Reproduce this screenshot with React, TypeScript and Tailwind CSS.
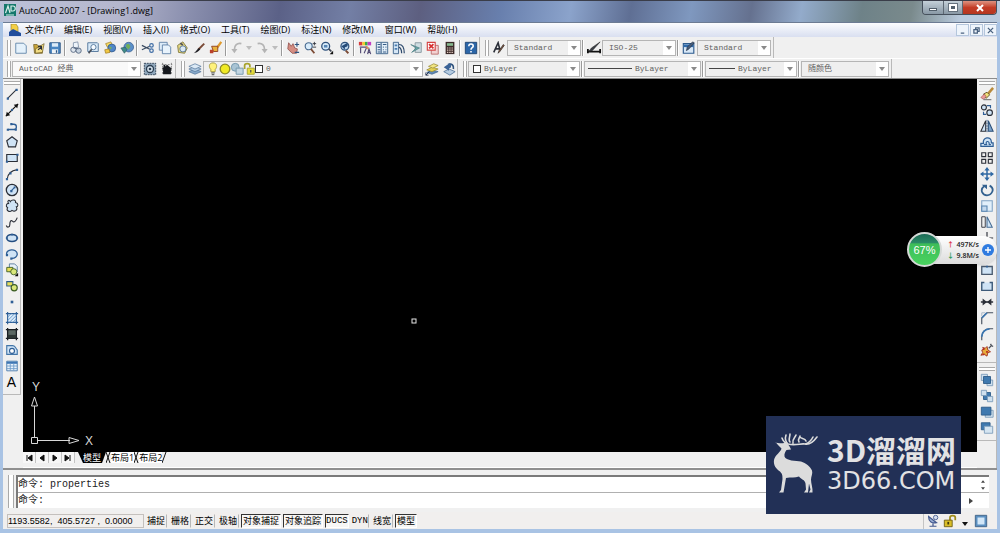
import type { ReactNode } from "react";

const MONO = "font-['Liberation_Mono','Noto_Sans_CJK_SC',monospace]";
const SANS = "font-['Open_Sans','Noto_Sans_CJK_SC',sans-serif]";

const B = "#2f5f96";
const L = "#cfe3f5";
const K = "#2b2f38";

// Desenhos dos botões, todos em uma grade de 16x16.
const ICONS: Record<string, ReactNode> = {
  new: <path d="M2 2.5h9l3 3v8.500H2z" fill="#e4f1fb" stroke="#5d83a8" />,
  open: (
    <>
      <path d="M3 4h4l1 1.500h5V14H4z" fill="#c9a43a" stroke="#6a5a22" strokeWidth=".8" />
      <path d="M5 9l10-6-2 10-8 1z" fill="#f3dc83" stroke="#6a5a22" strokeWidth=".8" />
      <path d="M8 10l4-3M12 10V6.500H8" stroke={K} strokeWidth="1.300" />
    </>
  ),
  save: (
    <>
      <path d="M2 2h12v12H2z" fill="#4a86c2" stroke="#2b5584" />
      <path d="M4.500 2.500h7v4h-7z" fill="#dcebf8" />
      <path d="M4.500 9.500h7V14h-7z" fill="#eef3f7" />
      <path d="M9 10.500h1.500v3H9z" fill="#2b5584" />
    </>
  ),
  plot: (
    <>
      <path d="M5 2l5-1 1 6-6 1z" fill="#eef4fa" stroke="#6c7f99" strokeWidth=".8" />
      <circle cx="5" cy="10" r="3" fill="#dfe6ee" stroke="#55667f" />
      <circle cx="11" cy="11" r="3" fill="#c7d3e0" stroke="#55667f" />
      <path d="M5 8l6 1" stroke="#55667f" />
    </>
  ),
  preview: (
    <>
      <path d="M2 2h11l1 1v9H2z" fill="#d9eaf8" stroke="#4c7096" />
      <circle cx="8.500" cy="7" r="3" fill="#f7fbff" stroke="#4c7096" />
      <path d="M6.500 9.500L3 14" stroke="#4a4f58" strokeWidth="2" />
    </>
  ),
  publish: (
    <>
      <path d="M3 3l6-2 2 4-6 2z" fill="#f6dc64" stroke="#a07b1d" strokeWidth=".8" />
      <circle cx="10" cy="8" r="4.500" fill="#4f86c8" stroke="#2c5283" strokeWidth=".8" />
      <path d="M7 6l3 1-1 3z" fill="#79b354" />
      <path d="M2 10l5-1 1 4-5 1z" fill="#f0c743" stroke="#a07b1d" strokeWidth=".8" />
    </>
  ),
  web: (
    <>
      <circle cx="10" cy="7" r="5.500" fill="#5b8fc9" stroke="#315a8b" strokeWidth=".8" />
      <path d="M7 4l3-1 2 3-2 4-3-3z" fill="#6fae5a" />
      <path d="M1 8l5-1 2 3-3 4z" fill="#3d8a86" stroke="#2b5560" strokeWidth=".7" />
    </>
  ),
  cut: (
    <>
      <path d="M1 5l9 4.500M1 10l9-4" stroke="#3c4d63" strokeWidth="1.400" />
      <circle cx="12" cy="5" r="2" stroke="#3f6da5" strokeWidth="1.400" />
      <circle cx="12" cy="11" r="2" stroke="#3f6da5" strokeWidth="1.400" />
    </>
  ),
  copy: (
    <>
      <path d="M1.500 1.500h9v9h-9z" fill="#dcebf8" stroke="#5b7fa6" />
      <path d="M5 4.500h7l2.500 2.500v7.500H5z" fill="#e8f3fc" stroke="#5b7fa6" />
    </>
  ),
  paste: (
    <>
      <path d="M3 5l6-4 5 7-3 6-7-1z" fill="#e9da83" stroke="#7f7637" />
      <circle cx="9" cy="9" r="3.500" fill="#dbe9f5" stroke="#4f7295" />
      <path d="M6 2.500l3 2" stroke="#555" strokeWidth="2" />
    </>
  ),
  match: (
    <>
      <path d="M14 3L7 10" stroke="#7a4a36" strokeWidth="2.200" />
      <path d="M8 8l1.500 1.500C7 13 4 13.500 2 14c2-1 3-4 6-6z" fill="#1f1f24" />
    </>
  ),
  block: (
    <>
      <path d="M14 1L9 8" stroke="#e09a2c" strokeWidth="2.600" />
      <path d="M3 6h7v6H5z" fill="#e9b23c" stroke="#8c3a1f" />
      <path d="M1 10h4v4H1z" fill="#b9402a" />
    </>
  ),
  undo: (
    <>
      <path d="M13 3C8 2 5 5 5 10" stroke="#b4b4b4" strokeWidth="2" />
      <path d="M1.500 9h7L5 14z" fill="#b4b4b4" />
    </>
  ),
  redo: (
    <>
      <path d="M3 3c5-1 8 2 8 7" stroke="#b4b4b4" strokeWidth="2" />
      <path d="M7.500 9h7L11 14z" fill="#b4b4b4" />
    </>
  ),
  pan: (
    <>
      <path d="M3 2l3 4 2-3 2 5 3 1-1 5H7L2 9z" fill="#d58d82" stroke="#8d4c49" strokeWidth=".9" />
      <path d="M10 4h5M12.500 1.500v5M10 13h5" stroke="#2f5480" strokeWidth="1.300" />
    </>
  ),
  zoom: (
    <>
      <circle cx="6.500" cy="6" r="4" fill="#d9ecfa" stroke="#47698f" strokeWidth="1.300" />
      <path d="M9 9l4 5" stroke="#7c4b35" strokeWidth="2" />
      <path d="M11 3h4M13 1v4M11 7h4" stroke={K} />
    </>
  ),
  zoomwin: (
    <>
      <circle cx="6.500" cy="6" r="4.500" fill="#d9ecfa" stroke="#2f527c" strokeWidth="1.500" />
      <path d="M4.500 4.500h4v3h-4z" fill="#5686b6" />
      <path d="M10 9l3 3" stroke="#3e4552" strokeWidth="2" />
      <path d="M15 11v4h-4z" fill="#111" />
    </>
  ),
  zoomprev: (
    <>
      <circle cx="9" cy="6" r="4.500" fill="#b8d3ec" stroke="#2f527c" strokeWidth="1.400" />
      <path d="M12 2L5 6l4 4V7c3 0 4-2 3-5z" fill="#244a78" />
      <path d="M10 11l3 3" stroke="#7c4b35" strokeWidth="2.200" />
    </>
  ),
  props: (
    <>
      <path d="M1 1h4v4H1z" fill="#d83a3a" />
      <path d="M5 1h3v4H5z" fill="#efce2f" />
      <path d="M8 1h3v4H8z" fill="#3aa64b" />
      <path d="M11 1h4v4h-4z" fill="#c23ec4" />
      <path d="M2 7h8l-3 7M3 14V8M11 15l1.500-6 2 6M11 13h3" stroke="#524a74" strokeWidth="1.300" />
      <path d="M9 6l3 3" stroke="#d98a5b" strokeWidth="2" />
    </>
  ),
  center: (
    <>
      <path d="M1.500 1.500h13v13h-13z" fill="#e3eff9" stroke="#365b85" />
      <path d="M7 2v12M3 4h3M3 7h3M3 10h3M9 4h4M9 7h1M12 7h1M9 10h1M12 10h1M9 12.500h4M3 12.500h3" stroke="#365b85" strokeWidth="1.200" />
    </>
  ),
  palettes: (
    <>
      <path d="M1.500 1.500h6v13h-6z" fill="#d5e6f5" stroke="#365b85" />
      <path d="M3 4h3v2H3zM3 8h3v2H3z" fill="#4e7fb1" />
      <path d="M8 4c4 0 6 4 6 10M8 7c2 1 3 4 3 7" stroke="#2e4a6d" strokeWidth="1.400" />
    </>
  ),
  sheet: (
    <>
      <path d="M7 2h7v11H7z" fill="#cfdde2" stroke="#84959c" />
      <path d="M2 4l10 4-9 5 5-5z" fill="#69a5a5" stroke="#44777d" strokeWidth=".7" />
    </>
  ),
  markup: (
    <>
      <path d="M6 5h8v10H6z" fill="#f2d2d2" stroke="#b86a6a" />
      <path d="M1.500 1.500h9v9h-9z" fill="#fff" stroke="#d34444" strokeWidth="1.300" />
      <path d="M3.500 3.500l5 5M8.500 3.500l-5 5" stroke="#d62f2f" strokeWidth="2" />
    </>
  ),
  calc: (
    <>
      <path d="M3 1h10v14H3z" fill="#3b2a29" />
      <path d="M4.500 2.500h7v3h-7z" fill="#86b98f" />
      <path d="M4.500 8h7M4.500 10.500h7M4.500 13h7" stroke="#e1c9c0" strokeWidth="1.300" strokeDasharray="1.600 1" />
    </>
  ),
  help: (
    <>
      <path d="M1.500 1.500h13v13h-13z" fill="#2c66a8" stroke="#1b416f" />
      <path d="M5.500 6c0-4 5.500-3 5 0-.3 1.800-2.500 1.500-2.500 4M8 11.300v1.700" stroke="#fff" strokeWidth="1.800" />
    </>
  ),
  textstyle: (
    <>
      <path d="M2 13L7 2l2 8M4 9h5" stroke={K} strokeWidth="1.800" />
      <path d="M14 5L9 12l-2 2 1-3 5-7z" fill="#8f5a3f" stroke="#222" strokeWidth=".8" />
    </>
  ),
  dimstyle: (
    <>
      <path d="M1 9v5M15 9v5M2 12h12" stroke="#111" strokeWidth="2" />
      <path d="M15 1L6 11l-4 1 3-4z" fill="#3c4048" stroke="#222" strokeWidth=".6" />
    </>
  ),
  tablestyle: (
    <>
      <path d="M1.500 3h12v11h-12z" fill="#d8e8f7" stroke="#2d5b8e" strokeWidth="1.300" />
      <path d="M2 4h11v3H2z" fill="#2f6bac" />
      <path d="M14 2L8 9l-3 2 1-4 6-6z" fill="#4c5f7a" stroke="#1d2c42" strokeWidth=".7" />
    </>
  ),
  gear: (
    <>
      <path d="M1.500 1.500h13v13h-13z" fill="#8ea6bb" stroke="#2b3d50" strokeDasharray="2 1" />
      <circle cx="8" cy="8" r="4" fill="#d7e5f0" stroke="#2b3d50" strokeWidth="1.500" />
      <circle cx="8" cy="8" r="1.500" fill="#2b3d50" />
    </>
  ),
  home: (
    <>
      <path d="M2 3h12M3 1v14M13 1v14" stroke="#777" strokeDasharray="2 1.500" />
      <path d="M4 3h2v2l2-2 6 5h-1.500v6h-9V8H2l2-2z" fill="#15181d" />
    </>
  ),
  layers: (
    <>
      <path d="M1 11l7-3 7 3-7 3z" fill="#87a8c9" stroke="#50749a" strokeWidth=".8" />
      <path d="M1 8l7-3 7 3-7 3z" fill="#b0cae2" stroke="#50749a" strokeWidth=".8" />
      <path d="M1 5l7-3 7 3-7 3z" fill="#dbe9f5" stroke="#50749a" strokeWidth=".8" />
    </>
  ),
  layerset: (
    <>
      <path d="M2 12l6-3 7 2-7 3z" fill="#5f88b4" stroke="#3e638c" strokeWidth=".8" />
      <path d="M2 9l6-3 7 2-7 3z" fill="#e4d152" stroke="#93852a" strokeWidth=".8" />
      <path d="M4 5l6-3 5 2-6 3z" fill="#f1e583" stroke="#93852a" strokeWidth=".8" />
      <path d="M1 15l4-4M1 15v-3M1 15h3" stroke="#1b2b4a" />
    </>
  ),
  layerprev: (
    <>
      <path d="M2 11l6-3 7 3-6 4z" fill="#b5cbe0" stroke="#3e638c" strokeWidth=".8" />
      <path d="M13 8c1-4-2-7-6-5" stroke="#2f527c" strokeWidth="2" />
      <path d="M9 1L2 6l6 4V7c3 0 3-3 1-6z" fill="#3a6296" />
    </>
  ),
  bulb: (
    <>
      <path d="M8 1c5 0 5 5 2.500 7.500V11h-5V8.500C3 6 3 1 8 1z" fill="#fff27a" stroke="#a4973a" />
      <path d="M6 12.500h4M6.500 14.500h3" stroke="#666" strokeWidth="1.300" />
    </>
  ),
  sun: <circle cx="8" cy="8" r="5.500" fill="#f0ea24" stroke="#8d8a2a" strokeWidth="1.500" />,
  freeze: (
    <>
      <circle cx="6" cy="6" r="4.500" fill="#a9c4d4" stroke="#6f94a9" />
      <path d="M7 7h8v7H7z" fill="#c3d6e2" stroke="#6f94a9" />
    </>
  ),
  lock: (
    <>
      <path d="M3 8V4c0-3 6-3 6 0v2" stroke="#a8a32c" strokeWidth="2" />
      <path d="M6 7h8v7H6z" fill="#e6dd3a" stroke="#a8a32c" />
      <path d="M10 9v3" stroke="#555" strokeWidth="1.500" />
    </>
  ),
  line: (
    <>
      <path d="M3 13L13 3" stroke={K} strokeWidth="1.200" />
      <path d="M2 12h2.500v2.500H2zM12 2h2.500v2.500H12z" fill={B} />
    </>
  ),
  xline: (
    <>
      <path d="M1 15L15 1" stroke="#111" strokeWidth="1.500" />
      <path d="M1 15l1-5 4 4zM15 1l-1 5-4-4z" fill="#111" />
      <circle cx="8" cy="8" r="1.300" fill={B} />
    </>
  ),
  pline: (
    <>
      <path d="M3 12h7c4 0 4-6 0-6H8" stroke={B} strokeWidth="1.500" />
      <path d="M2 11h2.500v2.500H2zM11 11h2.500v2.500H11zM6 4.500h2.500V7H6z" fill={B} />
    </>
  ),
  polygon: <path d="M8 2l6 4.500L12 13.500H4L2 6.500z" fill={L} stroke={K} strokeWidth="1.300" />,
  rect: (
    <>
      <path d="M2 4h12v8H2z" fill={L} stroke={K} strokeWidth="1.300" />
      <path d="M1 11h2.500v2.500H1zM13 3h2.500v2.500H13z" fill={B} />
    </>
  ),
  arc: (
    <>
      <path d="M2.500 14C3 8 7 4 14 3" stroke={K} strokeWidth="1.300" />
      <path d="M1 12.500h2.500V15H1zM5 6h2.500v2.500H5zM12.500 2H15v2.500h-2.500z" fill={B} />
    </>
  ),
  circle: (
    <>
      <circle cx="8" cy="8" r="6.500" fill={L} stroke={K} strokeWidth="1.500" />
      <path d="M7 9l4-4" stroke={B} strokeWidth="1.500" />
      <path d="M6 8h2.500v2.500H6zM10 4h2v2h-2z" fill={B} />
    </>
  ),
  cloud: <path d="M6 3c2-3 7-2 6 1 4 1 3 5 1 5 2 4-2 6-5 4-3 3-7 0-5-3-3-2-1-5 1-5-2-3 1-5 2-2z" fill={L} stroke={K} strokeWidth="1.200" />,
  spline: <path d="M1.500 12c1 3 4 2 4-1s1-6 3-4 4 0 5.500-4" stroke={K} strokeWidth="1.300" />,
  ellipse: (
    <>
      <ellipse cx="8" cy="8" rx="6" ry="4" fill={L} stroke="#234d80" strokeWidth="1.800" />
      <path d="M7 3h2v2H7zM1 7h2v2H1zM13 7h2v2h-2z" fill={B} />
    </>
  ),
  earc: (
    <>
      <path d="M2 9C0 2 14 1 14 8c0 3-3 5-6 5" stroke={B} strokeWidth="1.500" fill={L} />
      <path d="M6 12h2.500v2.500H6zM1 8h2.500v2.500H1z" fill={B} />
    </>
  ),
  insert: (
    <>
      <path d="M5 1h6l3 3v6H5z" fill="#e7f0f8" stroke="#54779c" />
      <path d="M2 5h7v5H2z" fill="#e7dd56" stroke="#3b5d22" />
      <circle cx="10" cy="10" r="3.500" fill="#d9e77a" stroke="#3b5d22" />
      <path d="M15 11v4h-4z" fill="#111" />
    </>
  ),
  makeblock: (
    <>
      <path d="M2 3h7v5H2z" fill="#e7dd56" stroke="#2e5b86" strokeWidth="1.200" />
      <circle cx="10.500" cy="10" r="3.500" fill="#dbe77a" stroke="#3b5d22" strokeWidth="1.300" />
    </>
  ),
  point: <path d="M6.500 6.500h3v3h-3z" fill={B} />,
  hatch: (
    <>
      <path d="M3 3h10v10H3z" fill="#dcecfa" stroke={B} strokeWidth="1.300" />
      <path d="M3 7l4-4M3 11l8-8M5 13l8-8M9 13l4-4" stroke="#5f92c6" />
      <path d="M1 3h2V1M15 3h-2V1M1 13h2v2M15 13h-2v2" stroke={B} strokeWidth="1.300" />
    </>
  ),
  gradient: (
    <>
      <path d="M3 3h10v10H3z" fill="#5a6762" stroke="#191d22" strokeWidth="1.500" />
      <path d="M3 9h10v4H3z" fill="#2c3533" />
      <path d="M1 3h2V1M15 3h-2V1M1 13h2v2M15 13h-2v2" stroke="#191d22" strokeWidth="1.500" />
    </>
  ),
  region: (
    <>
      <path d="M2 3h7c3 0 3 3 5 5v5H2z" fill={L} stroke="#4476a8" strokeWidth="1.300" />
      <circle cx="8" cy="9" r="2.800" fill="#fff" stroke={B} strokeWidth="1.300" />
    </>
  ),
  table: (
    <>
      <path d="M2 2.500h12v11H2z" fill="#e9f3fc" stroke="#4476a8" />
      <path d="M2 3h12v2.500H2z" fill="#3f77b4" />
      <path d="M2 8h12M2 11h12M6 5v8M10 5v8" stroke="#6f9cc9" />
    </>
  ),
  erase: (
    <>
      <path d="M15 1L9 8" stroke="#b98a3a" strokeWidth="3" />
      <path d="M4 8l4-2 3 3-4 4z" fill="#f0e27a" stroke="#5c4a2a" />
      <path d="M1 12l4-4 2 3-3 3z" fill="#e99a9a" stroke="#a24c4c" strokeWidth=".7" />
      <path d="M4 14.500h9" stroke="#555" />
    </>
  ),
  copyobj: (
    <>
      <circle cx="4.500" cy="5" r="2.800" fill={L} stroke={K} strokeWidth="1.300" />
      <circle cx="11" cy="11" r="3.200" fill={L} stroke={K} strokeWidth="1.300" />
      <path d="M8 3h4v3M4 10v3h3" stroke={B} strokeWidth="1.300" />
    </>
  ),
  mirror: (
    <>
      <path d="M6.500 2v12H1z" fill={L} stroke={K} strokeWidth="1.200" />
      <path d="M9.500 2v12H15z" fill="#7ba3cb" stroke="#2c5079" strokeWidth="1.200" />
      <path d="M8 1v14" stroke="#2c5079" strokeDasharray="2 1" />
    </>
  ),
  offset: (
    <>
      <path d="M1 13V9.500h3C2 3 13 0 13 8v1h2v4z" fill={L} stroke={B} strokeWidth="1.400" />
      <path d="M4.500 11h3c-2-4 3-5 3-1v1h2" stroke={B} strokeWidth="1.300" />
    </>
  ),
  array: <path d="M2 2h4.500v4.500H2zM9.500 2H14v4.500H9.500zM2 9.500h4.500V14H2zM9.500 9.500H14V14H9.500z" stroke={K} strokeWidth="1.300" />,
  move: (
    <>
      <path d="M8 2v12M2 8h12" stroke="#2f68a3" strokeWidth="1.700" />
      <path d="M8 0l3 4H5zM8 16l3-4H5zM0 8l4-3v6zM16 8l-4-3v6z" fill="#2f68a3" />
    </>
  ),
  rotate: (
    <>
      <path d="M5 3.500C-1 8 3 14 8 14s10-7 3-11" stroke="#33618f" strokeWidth="2" />
      <path d="M2 2h6v5z" fill="#33618f" />
    </>
  ),
  scale: (
    <>
      <path d="M2 2h12v12H2z" fill="#e1effa" stroke="#7fa2c4" strokeWidth="1.200" />
      <path d="M2 8h6v6H2z" fill="#c3d9ee" stroke="#5683ae" strokeWidth="1.200" />
    </>
  ),
  stretch: (
    <>
      <path d="M2 2h4v12H2z" stroke={K} />
      <path d="M8 2l6 12H8z" fill={L} stroke="#466d96" strokeWidth="1.200" />
    </>
  ),
  trim: <path d="M1 8h5M10 8h5M8 1v14" stroke={K} strokeWidth="1.300" />,
  extend: <path d="M1 8h10M13 1v14M8 5l3 3-3 3" stroke={K} strokeWidth="1.300" />,
  breakat: (
    <>
      <path d="M2 4h12v9H2z" fill={L} stroke="#49596d" strokeWidth="1.500" />
      <path d="M7 3h2v2H7z" fill={B} />
    </>
  ),
  breakobj: <path d="M5 4H2v9h12V4h-3" fill={L} stroke="#3d5a79" strokeWidth="1.600" />,
  join: (
    <>
      <path d="M1 8h14" stroke={K} strokeWidth="1.700" />
      <path d="M3 4l5 4-5 4zM13 4L8 8l5 4z" fill={K} />
    </>
  ),
  chamfer: (
    <>
      <path d="M2 15V8l6-6h7" stroke="#444f5e" strokeWidth="1.300" />
      <path d="M2 8l6-6" stroke="#3a75b0" strokeWidth="1.800" />
      <path d="M2 6V2h4" stroke="#a6b4c3" />
    </>
  ),
  fillet: (
    <>
      <path d="M2 15v-4c0-5 4-9 9-9h4" stroke="#444f5e" strokeWidth="1.300" />
      <path d="M2 11c0-5 4-9 9-9" stroke="#3a75b0" strokeWidth="2" />
    </>
  ),
  explode: (
    <>
      <path d="M3 5l3 1 2-2 1 4 3 2-3 1-1 4-3-2-4 1 2-3-1-3 3-1z" fill="#e8ad3c" stroke="#9d2e1f" />
      <path d="M10 6l3-3M12 1l1 2 2 1" stroke="#4b4f58" strokeWidth="1.500" />
      <path d="M3 12h2v2H3zM7 9h2v2H7zM3 6h2v2H3z" fill="#b8291f" />
    </>
  ),
  front: (
    <>
      <path d="M1.500 1.500h7v7h-7zM8 8h6.500v6.500H8z" fill="#cfe0ee" stroke="#7b9cb9" />
      <path d="M4 4h8v8H4z" fill="#3f79af" stroke="#2b5a88" />
    </>
  ),
  back: (
    <>
      <path d="M4 4h8v8H4z" fill="#3f79af" stroke="#2b5a88" />
      <path d="M1.500 1.500h6v6h-6zM8.500 8.500h6v6h-6z" fill="#cfe0ee" stroke="#7b9cb9" />
    </>
  ),
  above: (
    <>
      <path d="M6 6h9v8H6z" fill="#cfe0ee" stroke="#7b9cb9" />
      <path d="M1.500 2.500h11v9h-11z" fill="#3f79af" stroke="#2b5a88" />
    </>
  ),
  under: (
    <>
      <path d="M1.500 2h10v8h-10z" fill="#3f79af" stroke="#2b5a88" />
      <path d="M5 6h9.500v8H5z" fill="#d5e5f1" stroke="#7b9cb9" />
    </>
  ),
  dish: (
    <>
      <path d="M3 3c0 6 4 8 9 7zM8 10v4M4 14h8" fill="#9fb2d6" stroke="#44598f" strokeWidth="1.400" />
      <circle cx="11" cy="4" r="2.500" fill="#d6deee" stroke="#44598f" />
    </>
  ),
  padlock: (
    <>
      <path d="M8 8V4c0-3 6-3 6 0v3" stroke="#a08c1a" strokeWidth="2" />
      <path d="M1.500 7h9v7.500h-9z" fill="#d9bd27" stroke="#6b5d12" />
      <path d="M6 9v3" stroke="#3f370a" strokeWidth="2" />
    </>
  ),
  screen: (
    <>
      <path d="M1.500 1.500h13v13h-13z" fill="#5b8fc0" stroke="#3b5f83" />
      <path d="M4 4h8v8H4z" fill="#d3e7f8" />
    </>
  ),
};

function Icon({ name }: { name: string }) {
  return (
    <svg viewBox="0 0 16 16" fill="none" aria-hidden="true" className="h-3.5 w-3.5 shrink-0">
      {ICONS[name]}
    </svg>
  );
}

function Tool({ name }: { name: string }) {
  return (
    <button type="button" aria-label={name} className="flex h-4 w-[17px] shrink-0 items-center justify-center">
      {name === "mtext" ? (
        <span className="font-['Liberation_Sans',sans-serif] text-[14px] leading-4 text-black">A</span>
      ) : (
        <Icon name={name} />
      )}
    </button>
  );
}

function Grip() {
  return <span className="mr-px h-4 w-1 shrink-0 border-x border-[#a9a9a9] bg-white" />;
}

function Sep() {
  return <span className="mx-[1px] h-4 w-[2px] shrink-0 border-l border-[#9a9a9a] bg-white" />;
}

function Arrow({ dim }: { dim?: boolean }) {
  return (
    <svg viewBox="0 0 6 4" aria-hidden="true" className="h-1 w-1.5 shrink-0">
      <path d="M0 0h6L3 4z" fill={dim ? "#bdbdbd" : "#8a8a8a"} />
    </svg>
  );
}

type ComboProps = { label: string; value: string; width: string; lead?: ReactNode; white?: boolean };

function Combo({ label, value, width, lead, white }: ComboProps) {
  return (
    <label className={`flex h-4 min-w-0 shrink items-center border border-[#b5b5b5] ${white ? "bg-[#f9f9f9]" : "bg-[#efefef]"} pl-[3px] ${width}`}>
      {lead}
      <select aria-label={label} className={`${MONO} h-3.5 min-w-0 flex-1 appearance-none bg-transparent pl-[3px] text-[8px] leading-3 text-[#5f5f5f]`}>
        <option>{value}</option>
      </select>
      <span className="flex h-3.5 w-3 items-center justify-center bg-white">
        <Arrow />
      </span>
    </label>
  );
}

const MENUS = ["文件(F)", "编辑(E)", "视图(V)", "插入(I)", "格式(O)", "工具(T)", "绘图(D)", "标注(N)", "修改(M)", "窗口(W)", "帮助(H)"];
const DRAW = ["line", "xline", "pline", "polygon", "rect", "arc", "circle", "cloud", "spline", "ellipse", "earc", "insert", "makeblock", "point", "hatch", "gradient", "region", "table", "mtext"];
const MODIFY = ["erase", "copyobj", "mirror", "offset", "array", "move", "rotate", "scale", "stretch", "trim", "extend", "breakat", "breakobj", "join", "chamfer", "fillet", "explode"];
const ORDER = ["front", "back", "above", "under"];
const MODES = [
  { name: "捕捉", on: false },
  { name: "栅格", on: false },
  { name: "正交", on: false },
  { name: "极轴", on: false },
  { name: "对象捕捉", on: true },
  { name: "对象追踪", on: true },
  { name: "DUCS", on: true, latin: true },
  { name: "DYN", on: false, latin: true },
  { name: "线宽", on: false },
  { name: "模型", on: true },
];

function Tools({ names }: { names: string[] }) {
  return (
    <>
      {names.map((n) => (
        <Tool key={n} name={n} />
      ))}
    </>
  );
}

function TitleBar() {
  return (
    <header className="flex h-[22px] items-start border-t border-[#3a3d49] bg-[linear-gradient(100deg,#bcc2d8_0%,#b4b6cd_12%,#8a8fae_19%,#5b6187_28%,#737fa5_35%,#5d5f80_42%,#687fad_50%,#8ba3cb_57%,#5f6f94_63%,#7f98bf_69%,#65718f_75%,#93abcb_80%,#6e8288_86%,#7a8a8c_91%,#b9cadd_96%)] pl-1">
      <svg viewBox="0 0 12 12" aria-hidden="true" className="mt-[3px] h-3 w-3">
        <path d="M0 0h12v12H0z" fill="#16786c" />
        <path d="M1.500 9L4 2l2 7M7 2h2c3 0 3 5 0 5H7zM2 11h8" stroke="#d8efe9" strokeWidth="1.200" fill="none" />
      </svg>
      <h1 className={`${SANS} ml-[3px] mt-1 text-[9px] leading-3 text-black`}>AutoCAD 2007 - [Drawing1.dwg]</h1>
      <div className="ml-auto mr-[3px] flex h-3.5 overflow-hidden rounded-b border border-t-0 border-[#46505c]">
        <button type="button" aria-label="最小化" className="flex w-5 items-center justify-center bg-gradient-to-b from-[#c4d0d8] to-[#8998a5]">
          <span className="mt-1 h-[3px] w-2 border border-[#53606c] bg-white" />
        </button>
        <button type="button" aria-label="最大化" className="flex w-5 items-center justify-center border-x border-[#5d6873] bg-gradient-to-b from-[#c4d0d8] to-[#8998a5]">
          <span className="h-[7px] w-2 border-2 border-white bg-[#53606c] outline outline-[#66727e]" />
        </button>
        <button type="button" aria-label="关闭" className="flex w-[33px] items-center justify-center bg-gradient-to-b from-[#dd9280] via-[#c33c26] to-[#b5361f]">
          <svg viewBox="0 0 8 8" aria-hidden="true" className="h-2 w-2">
            <path d="M1 1l6 6M7 1L1 7" stroke="#fff" strokeWidth="2" />
          </svg>
        </button>
      </div>
    </header>
  );
}

function MenuBar() {
  return (
    <nav className="flex h-3.5 items-center bg-gradient-to-b from-[#fbfcfe] to-[#d9dff0] pl-1.5">
      <svg viewBox="0 0 12 12" aria-hidden="true" className="h-3 w-3">
        <path d="M2 0h5l2 3v5H2z" fill="#f4cf45" stroke="#8c7a2b" strokeWidth=".6" />
        <path d="M0 8l4-3 8 4v3H0z" fill="#234f9c" />
      </svg>
      <ul className={`${SANS} ml-1 flex gap-[11px] text-[9px] leading-3 text-black`}>
        {MENUS.map((m) => (
          <li key={m}>
            <button type="button" className="whitespace-nowrap">{m}</button>
          </li>
        ))}
      </ul>
      <div className="ml-auto flex gap-px">
        {["M2 7h4", "M3 3V1h4v4H5M1 3h4v4H1z", "M1 1l6 6M7 1L1 7"].map((d, i) => (
          <button key={d} type="button" aria-label={["最小化图形", "还原图形", "关闭图形"][i]} className="flex h-3 w-[13px] items-center justify-center border border-[#b4c6dc] bg-[#eef4fb]">
            <svg viewBox="0 0 8 8" aria-hidden="true" className="h-[7px] w-[7px]">
              <path d={d} stroke="#47607e" strokeWidth="1.400" fill="none" />
            </svg>
          </button>
        ))}
      </div>
    </nav>
  );
}

function Toolbars() {
  return (
    <div className="border-b border-[#8c8c8c] bg-[#f0f0f0]">
      <div className="flex h-[21px] items-center">
        <div className="flex h-full items-center border-r border-[#b9b9b9] pl-1">
          <Grip />
          <Tools names={["new", "open", "save"]} />
          <Sep />
          <Tools names={["plot", "preview", "publish", "web"]} />
          <Sep />
          <Tools names={["cut", "copy", "paste", "match", "block"]} />
          <Sep />
          <Tool name="undo" />
          <span className="flex w-2 justify-center"><Arrow dim /></span>
          <Tool name="redo" />
          <span className="flex w-2.5 justify-center"><Arrow dim /></span>
          <Sep />
          <Tools names={["pan", "zoom", "zoomwin", "zoomprev"]} />
          <Sep />
          <Tools names={["props", "center", "palettes", "sheet", "markup", "calc"]} />
          <Sep />
          <Tool name="help" />
        </div>
        <div className="flex h-full min-w-0 items-center border-r border-[#b9b9b9] pl-[5px] pr-0.5">
          <Grip />
          <Tool name="textstyle" />
          <Combo label="文字样式" value="Standard" width="w-[74px]" />
          <Sep />
          <Tool name="dimstyle" />
          <Combo label="标注样式" value="ISO-25" width="w-[74px]" />
          <Sep />
          <Tool name="tablestyle" />
          <Combo label="表格样式" value="Standard" width="w-[74px]" />
        </div>
      </div>
      <div className="flex h-5 items-center border-t border-white">
        <div className="flex h-full items-center border-r border-[#b9b9b9] pl-1">
          <Grip />
          <Combo label="工作空间" value="AutoCAD 经典" width="w-[129px]" white />
          <Tools names={["gear", "home"]} />
        </div>
        <div className="flex h-full items-center border-r border-[#b9b9b9] pl-[5px]">
          <Grip />
          <Tool name="layers" />
          <Combo
            label="图层"
            value="0"
            width="w-[220px]"
            lead={
              <span className="flex">
                {["bulb", "sun", "freeze", "lock"].map((n) => (
                  <span key={n} className="flex w-3 justify-center"><Icon name={n} /></span>
                ))}
                <span className="flex h-3.5 w-2 items-center"><span className="h-2 w-2 border border-[#333] bg-white" /></span>
              </span>
            }
          />
          <Tools names={["layerset", "layerprev"]} />
        </div>
        <div className="flex h-full min-w-0 items-center border-r border-[#b9b9b9] pl-[5px] pr-0.5">
          <Grip />
          <Combo label="颜色" value="ByLayer" width="w-[112px]" lead={<span className="ml-px h-2 w-2 border border-[#333] bg-white" />} />
          <Sep />
          <Combo label="线型" value="ByLayer" width="w-[117px]" lead={<span className="h-px w-11 bg-[#444]" />} />
          <Sep />
          <Combo label="线宽" value="ByLayer" width="w-[92px]" lead={<span className="h-px w-[26px] bg-[#444]" />} />
          <Sep />
          <Combo label="打印样式" value="随颜色" width="w-[88px]" />
        </div>
      </div>
    </div>
  );
}

function SideGrip() {
  return <span className="mx-auto mb-px h-1 w-4 shrink-0 border-y border-[#a9a9a9] bg-white" />;
}

function UcsIcon() {
  return (
    <svg viewBox="0 -8 72 78" className="absolute bottom-0 left-1.5 h-[78px] w-[72px]" fill="none" stroke="#d8d8d8">
      <path d="M2.500 55.500h6v6h-6zM5.500 55V24M9 58.500h32" />
      <path d="M5.500 15l-3 9h6zM50 58.500l-10-3v6z" />
      <text x="3" y="9" fill="#d8d8d8" stroke="none" fontSize="12" fontFamily="Liberation Sans, sans-serif">Y</text>
      <text x="56" y="63" fill="#d8d8d8" stroke="none" fontSize="12" fontFamily="Liberation Sans, sans-serif">X</text>
    </svg>
  );
}

function TabEdge({ d }: { d: string }) {
  return (
    <svg viewBox="0 0 5 11" aria-hidden="true" className="h-[11px] w-[5px]">
      <path d={d} stroke="#111" fill="none" />
    </svg>
  );
}

function LayoutTabs() {
  return (
    <div className="flex h-4 items-start border-b border-white bg-[#f0f0f0]">
      {["M2 1v6M7 1v6L3 4z", "M6 1v6L2 4z", "M2 1v6l4-3z", "M6 1v6M1 1v6l4-3z"].map((d, i) => (
        <button key={d} type="button" aria-label={["第一个", "上一个", "下一个", "最后一个"][i]} className="flex h-[11px] w-[13px] items-center justify-center border-r border-[#c4c4c4] bg-[#f7f7f7]">
          <svg viewBox="0 0 8 8" aria-hidden="true" className="h-2 w-2">
            <path d={d} fill="#111" stroke="#111" />
          </svg>
        </button>
      ))}
      <div className={`${SANS} ml-[3px] flex text-[9px] leading-[11px]`}>
        <button type="button" className="bg-black px-[5px] text-white [clip-path:polygon(0_0,100%_0,calc(100%-4px)_100%,5px_100%)]">模型</button>
        <TabEdge d="M0 0l4 11M0 11L4 0" />
        <button type="button" className="bg-white text-black">布局1</button>
        <TabEdge d="M0 11L4 0M0 0l4 11" />
        <button type="button" className="bg-white text-black">布局2</button>
        <TabEdge d="M0 11L4 0" />
      </div>
    </div>
  );
}

function CommandLine() {
  return (
    <section className="flex border-t-2 border-[#8f8f8f] bg-[#f0f0f0] pb-1 pl-[5px] pr-2 pt-[5px]">
      <span className="mr-[2px] w-1.5 border-x border-[#a9a9a9] bg-white" />
      <div className={`${MONO} min-w-0 flex-1 border-l-2 border-t-2 border-[#7a7a7a] bg-white text-[10px] leading-3 text-[#222]`}>
        <div className="flex h-4 items-center justify-between border-b border-[#b0b0b0]">
          <p>命令: properties</p>
          <div className="flex w-3 flex-col items-center gap-1">
            <svg viewBox="0 0 6 4" aria-hidden="true" className="h-[3px] w-1"><path d="M0 4h6L3 0z" fill="#444" /></svg>
            <svg viewBox="0 0 6 4" aria-hidden="true" className="h-[3px] w-1"><path d="M0 0h6L3 4z" fill="#444" /></svg>
          </div>
        </div>
        <div className="flex h-[15px] items-center">
          <label htmlFor="cmd">命令:</label>
          <input id="cmd" className="h-3 min-w-0 flex-1 bg-transparent outline-none" />
          <svg viewBox="0 0 4 6" aria-hidden="true" className="mr-4 h-1.5 w-1"><path d="M0 0v6l4-3z" fill="#444" /></svg>
        </div>
      </div>
    </section>
  );
}

function StatusBar() {
  return (
    <footer className={`${SANS} flex h-[17px] items-center bg-[#f1efee] pl-1 text-[9px] leading-3 text-black`}>
      <output className="mr-px h-3.5 w-[137px] whitespace-pre border border-[#c4c0bd] font-['Liberation_Sans',sans-serif] leading-3">1193.5582,  405.5727 ,  0.0000</output>
      <div className="flex gap-[2px]">
        {MODES.map((m) => (
          <button
            key={m.name}
            type="button"
            aria-pressed={m.on}
            className={`h-3.5 whitespace-nowrap border leading-3 ${m.latin ? `${MONO} text-[9px]` : "px-px"} ${m.on ? "border-b-white border-l-[#333] border-r-white border-t-[#333] bg-[#f7f6f5]" : "border-b-transparent border-l-transparent border-r-[#b8b8b8] border-t-transparent"}`}
          >
            {m.name}
          </button>
        ))}
      </div>
      <div className="ml-auto flex items-center border-l border-[#c4c4c4] pr-2">
        <Tool name="dish" />
        <Tool name="padlock" />
        <span className="flex w-3.5 justify-center pt-1.5">
          <svg viewBox="0 0 6 4" aria-hidden="true" className="h-1 w-1.5"><path d="M0 0h6L3 4z" fill="#111" /></svg>
        </span>
        <Tool name="screen" />
      </div>
    </footer>
  );
}

function SpeedWidget() {
  return (
    <div className={`${SANS} absolute right-[3px] top-[232px] flex items-center text-[7px] text-[#222]`}>
      <div className="z-10 flex h-[35px] w-[35px] items-center justify-center rounded-full border-2 border-[#d5d9d7] bg-[linear-gradient(#1c6b56_0%,#2a8a66_28%,#3dbd59_32%,#49d35f_100%)] font-['Liberation_Sans',sans-serif] text-[11px] leading-3 text-white">
        67%
      </div>
      <div className="-ml-4 flex h-7 items-center rounded-r-full bg-gradient-to-b from-white to-[#dcdcdc] pl-[21px] pr-[3px] shadow">
        <div className="mr-[3px] w-8 font-semibold leading-[11px]">
          <p className="flex justify-between whitespace-nowrap"><span className="text-[#dd3444]">↑</span>497K/s</p>
          <p className="flex justify-between whitespace-nowrap"><span className="text-[#249a55]">↓</span>9.8M/s</p>
        </div>
        <button type="button" aria-label="加速" className="flex h-3 w-3 items-center justify-center rounded-full bg-[#2f7be0]">
          <svg viewBox="0 0 8 8" aria-hidden="true" className="h-1.5 w-1.5"><path d="M4 0v8M0 4h8" stroke="#fff" strokeWidth="1.800" /></svg>
        </button>
      </div>
    </div>
  );
}

function Watermark() {
  return (
    <div className="absolute bottom-[19px] right-[39px] flex h-[98px] w-[195px] items-center bg-[#223056] text-[#e2e2e4]">
      <svg viewBox="0 0 50 64" aria-hidden="true" className="ml-1.5 h-16 w-[50px] shrink-0">
        <path
          d="M3.500 9l2.500 3 3.500 3.500C9 19 3 22 2 27c-.8 5 2 9 6 11.500 2.500 2.500 2.500 4 2.500 7.500L9 57l-2 2.500h4.500L14 45c5-1 9 0 13-1.500 2 3 6 3 6.500 7l.5 6-2 3h4l1-9 1.500 6-1.500 3h3.500c.5-4-1.500-9-1.500-13 0-3 2-6 1-9-2-4-6-7.500-11-9-5-.8-15-.5-16.500-5-.5-3 1-5 2-6.500l4.500-.5c-1-2-2-5-5-6.500-3-.5-6 1-10.500-.5z"
          fill="#dcdcdc"
        />
        <path
          d="M14 11c-2-3-3-3-4-6M16 11c-3-3-3-6-2-9M18 9c-2-2 0-5 0-8M16 11c8 2 13-1 17 0s9-3 12-7M21 10c-1-4 2-5 3-8M27 9c-2-3 1-4 1-6M33 11c4-1 6-3 8-7M28 4c1 2 5 1 6 4"
          fill="none"
          stroke="#dcdcdc"
          strokeWidth="1.600"
          strokeLinecap="round"
        />
      </svg>
      <div className="ml-[5px] whitespace-nowrap pb-1">
        <p className="font-['Noto_Sans_CJK_SC',sans-serif] text-[30px] font-bold leading-9">3D溜溜网</p>
        <p className="font-['DejaVu_Sans',sans-serif] text-[24px] leading-7">3D66.COM</p>
      </div>
    </div>
  );
}

export default function App() {
  return (
    <div className="relative flex min-h-screen flex-col overflow-hidden bg-[#a9c3e4]">
      <TitleBar />
      <div className="mx-[3px] mb-1 flex flex-1 flex-col border-t border-[#6c7b93] bg-[#f0f0f0]">
        <MenuBar />
        <Toolbars />
        <main className="flex flex-1">
          <aside className="flex w-5 flex-col">
            <div className="mr-0.5 flex flex-col items-center border-b border-r border-[#b9b9b9] pb-1 pt-0.5">
              <SideGrip />
              <Tools names={DRAW} />
            </div>
          </aside>
          <div className="flex min-w-0 flex-1 flex-col">
            <div className="relative flex-1 bg-black">
              <span className="absolute left-[41%] top-[65%] h-[5px] w-[5px] -translate-x-1/2 -translate-y-1/2 border border-[#e5e5e5]" />
              <UcsIcon />
            </div>
            <LayoutTabs />
          </div>
          <aside className="flex w-5 flex-col border-r border-[#b9b9b9]">
            <div className="flex flex-col items-center border-b border-[#b9b9b9] pb-1 pt-0.5">
              <SideGrip />
              <Tools names={MODIFY} />
            </div>
            <div className="flex flex-col items-center border-b border-[#b9b9b9] py-1">
              <SideGrip />
              <Tools names={ORDER} />
            </div>
          </aside>
        </main>
        <CommandLine />
        <StatusBar />
      </div>
      <SpeedWidget />
      <Watermark />
    </div>
  );
}
